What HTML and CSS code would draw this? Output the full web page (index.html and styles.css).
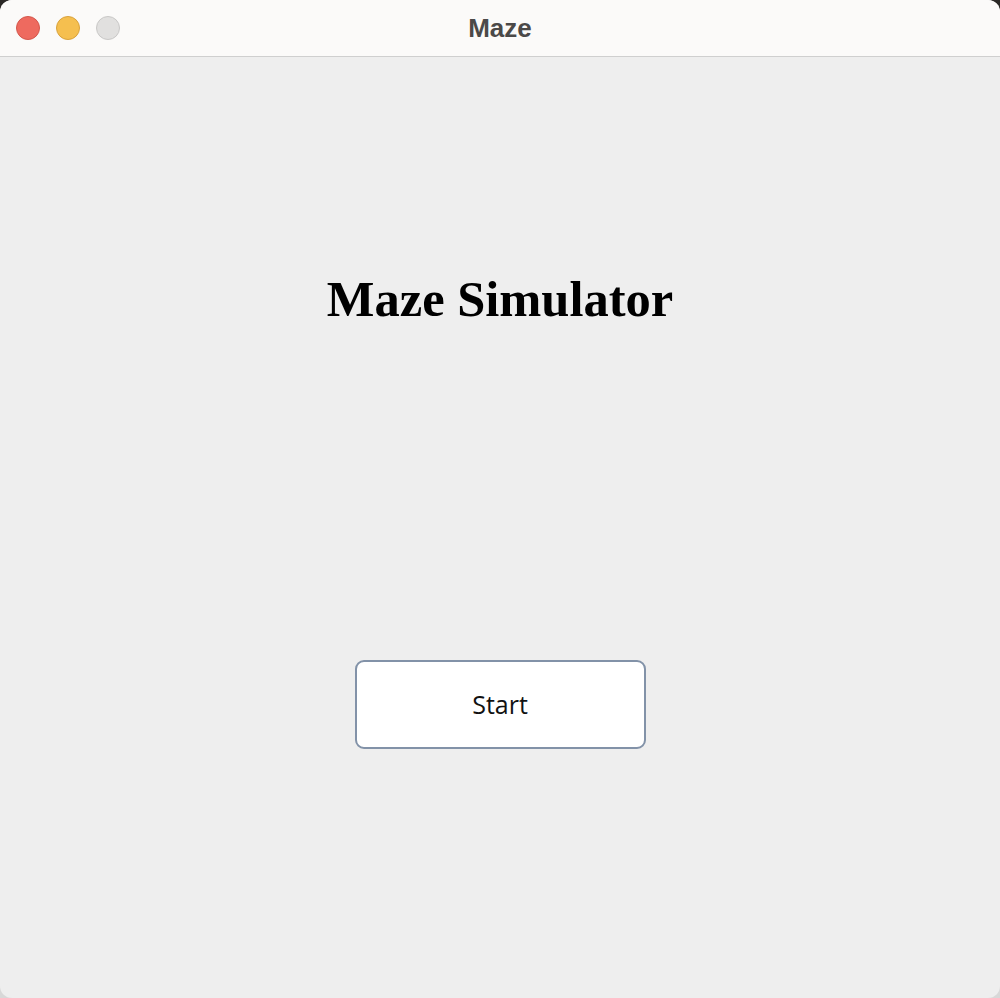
FILE: index.html
```html
<!DOCTYPE html>
<html>
<head>
<meta charset="utf-8">
<title>Maze</title>
<link rel="stylesheet" href="styles.css">
</head>
<body>
<div class="window">
  <div class="titlebar">
    <div class="lights">
      <span class="light red"></span>
      <span class="light yellow"></span>
      <span class="light grey"></span>
    </div>
    <div class="title">Maze</div>
  </div>
  <div class="content">
    <h1 class="heading">Maze Simulator</h1>
    <button class="start">Start</button>
  </div>
</div>
</body>
</html>
```
FILE: styles.css
```css
html, body {
  margin: 0;
  padding: 0;
  height: 100%;
}
body {
  background: linear-gradient(#2b2826 0, #2b2826 60px, #d8d8d8 60px);
  width: 1000px;
  height: 998px;
  overflow: hidden;
}
.window {
  width: 1000px;
  height: 998px;
  border-radius: 12px;
  overflow: hidden;
  background: #eeeeee;
  display: flex;
  flex-direction: column;
}
.titlebar {
  height: 56px;
  flex: 0 0 56px;
  background: #fbfaf9;
  border-bottom: 1px solid #cfcfcf;
  display: flex;
  align-items: center;
  justify-content: center;
  position: relative;
}
.lights {
  position: absolute;
  left: 16px;
  top: 16px;
  display: flex;
  gap: 16px;
}
.light {
  width: 22px;
  height: 22px;
  border-radius: 50%;
  border: 1px solid transparent;
}
.red { background: #ee6a5f; border-color: #d4574c; }
.yellow { background: #f5bf4f; border-color: #d9a23c; }
.grey { background: #e1e0df; border-color: #c9c8c7; }
.title {
  font-family: "Liberation Sans", Arial, sans-serif;
  font-weight: 700;
  font-size: 26px;
  color: #4b4948;
  line-height: 54px;
}
.content {
  flex: 1;
  display: flex;
  flex-direction: column;
  align-items: center;
  padding-top: 213px;
}
.heading {
  margin: 0;
  font-family: "Liberation Serif", "Times New Roman", serif;
  font-weight: 700;
  font-size: 50.5px;
  line-height: 58px;
  color: #000;
}
.start {
  margin-top: 332px;
  width: 291px;
  height: 89px;
  background: #fff;
  border: 2px solid #8292a8;
  border-radius: 9px;
  font-family: "Open Sans", "Liberation Sans", sans-serif;
  font-size: 25px;
  color: #111;
  padding: 0 0 2px 0;
}
```
